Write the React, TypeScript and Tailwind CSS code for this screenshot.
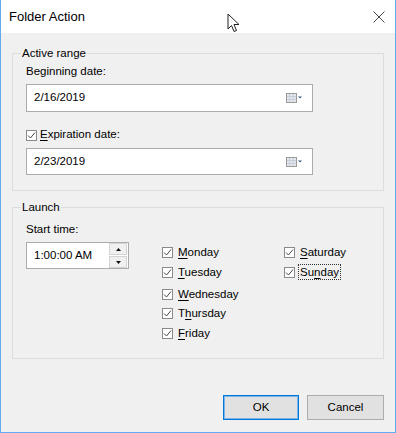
import React from 'react';

const font = { fontFamily: '"Liberation Sans", Arial, sans-serif' };

const Check = () => (
  <span className="w-[11px] h-[11px] border border-[#8a8a8a] bg-white flex items-center justify-center shrink-0">
    <svg width="9" height="9" viewBox="0 0 9 9">
      <path d="M1 4.5 L3.5 7 L8 1.5" fill="none" stroke="#4a4a4a" strokeWidth="1" />
    </svg>
  </span>
);

const CalendarIcon = () => (
  <svg width="17" height="10" viewBox="0 0 17 10">
    <rect x="0.5" y="0.5" width="10" height="9" fill="#e4e8ee" stroke="#9a9a9a" />
    <path d="M3.5 1 V9 M7 1 V9 M1 3.5 H10 M1 6.5 H10" stroke="#c8ced8" strokeWidth="1" />
    <path d="M12 3.5 H16 L14 5.5 Z" fill="#3c5a80" />
  </svg>
);

const DateBox = ({ value, h }: { value: string; h: string }) => (
  <div className={`w-[287px] ${h} bg-white border border-[#acacac] flex items-center justify-between pl-[7px] pr-[9px]`}>
    <span>{value}</span>
    <CalendarIcon />
  </div>
);

type Day = { pre: string; u: string; post: string; focus?: boolean; mt: string };

const DayBox = ({ d }: { d: Day }) => (
  <div className={`flex items-center h-[16px] ${d.mt}`}>
    <Check />
    <span
      className={`ml-[3px] leading-[14px] px-[1px] ${
        d.focus ? 'border border-dotted border-[#333]' : 'border border-transparent'
      }`}
    >
      {d.pre}
      <span className="underline underline-offset-2">{d.u}</span>
      {d.post}
    </span>
  </div>
);

const col1: Day[] = [
  { pre: '', u: 'M', post: 'onday', mt: 'mt-0' },
  { pre: '', u: 'T', post: 'uesday', mt: 'mt-[4px]' },
  { pre: '', u: 'W', post: 'ednesday', mt: 'mt-[6px]' },
  { pre: 'T', u: 'h', post: 'ursday', mt: 'mt-[3px]' },
  { pre: '', u: 'F', post: 'riday', mt: 'mt-[4px]' },
];

const col2: Day[] = [
  { pre: '', u: 'S', post: 'aturday', mt: 'mt-0' },
  { pre: 'Su', u: 'n', post: 'day', focus: true, mt: 'mt-[4px]' },
];

export default function App() {
  return (
    <div
      className="relative w-[396px] h-[433px] flex flex-col bg-[#f0f0f0] border-x border-b border-[#62aaee] text-[11.5px] text-black"
      style={font}
    >
      {/* Title bar */}
      <div className="h-[33px] bg-white flex items-center justify-between pl-[8px] pr-[10px] shrink-0">
        <span className="text-[13px]">Folder Action</span>
        <svg width="12" height="12" viewBox="0 0 12 12">
          <path d="M0.5 0.5 L11.5 11.5 M11.5 0.5 L0.5 11.5" stroke="#444" strokeWidth="1" />
        </svg>
      </div>

      <div className="flex-1 flex flex-col px-[11px]">
        {/* Active range */}
        <fieldset className="mt-[12px] border border-[#dcdcdc]">
          <legend className="ml-[8px] px-[1px] leading-[16px]">Active range</legend>
          <div className="px-[13px] pb-[15px]">
            <div className="mt-[2px] leading-[16px]">Beginning date:</div>
            <div className="mt-[5px]">
              <DateBox value="2/16/2019" h="h-[28px]" />
            </div>
            <div className="mt-[15px] h-[16px] flex items-center">
              <Check />
              <span className="ml-[3px]">
                <span className="underline underline-offset-2">E</span>xpiration date:
              </span>
            </div>
            <div className="mt-[5px]">
              <DateBox value="2/23/2019" h="h-[27px]" />
            </div>
          </div>
        </fieldset>

        {/* Launch */}
        <fieldset className="mt-[8px] border border-[#dcdcdc]">
          <legend className="ml-[8px] px-[1px] leading-[16px]">Launch</legend>
          <div className="px-[13px] pb-[17px] flex items-start">
            <div className="mt-[6px] w-[103px]">
              <div className="leading-[16px]">Start time:</div>
              <div className="mt-[5px] h-[27px] bg-white border border-[#acacac] flex items-center justify-between pl-[7px] pr-[1px]">
                <span>1:00:00 AM</span>
                <div className="flex flex-col w-[18px] h-[25px] gap-px">
                  <div className="flex-1 bg-[#f0f0f0] border border-[#d4d4d4] flex items-center justify-center">
                    <svg width="5" height="3" viewBox="0 0 5 3">
                      <path d="M0 3 H5 L2.5 0 Z" fill="#111" />
                    </svg>
                  </div>
                  <div className="flex-1 bg-[#f0f0f0] border border-[#d4d4d4] flex items-center justify-center">
                    <svg width="5" height="3" viewBox="0 0 5 3">
                      <path d="M0 0 H5 L2.5 3 Z" fill="#111" />
                    </svg>
                  </div>
                </div>
              </div>
            </div>

            <div className="ml-[33px] mt-[29px] w-[122px] flex flex-col">
              {col1.map((d) => (
                <DayBox key={d.post} d={d} />
              ))}
            </div>
            <div className="mt-[29px] flex flex-col">
              {col2.map((d) => (
                <DayBox key={d.post} d={d} />
              ))}
            </div>
          </div>
        </fieldset>

        {/* Buttons */}
        <div className="mt-auto mb-[12px] flex justify-end gap-[8px]">
          <button className="w-[76px] h-[25px] bg-[#e1e1e1] border border-[#0078d7] shadow-[inset_0_0_0_1px_#7ab4ea]">
            OK
          </button>
          <button className="w-[77px] h-[25px] bg-[#e1e1e1] border border-[#adadad]">Cancel</button>
        </div>
      </div>

      {/* Mouse pointer */}
      <svg className="absolute left-[226px] top-[13px]" width="14" height="21" viewBox="0 0 14 21">
        <path
          d="M1 1 V16 L4.5 12.5 L7 18.5 L9.5 17.5 L7 11.5 H12 Z"
          fill="#fff"
          stroke="#222"
          strokeWidth="1"
          strokeLinejoin="miter"
        />
      </svg>
    </div>
  );
}
